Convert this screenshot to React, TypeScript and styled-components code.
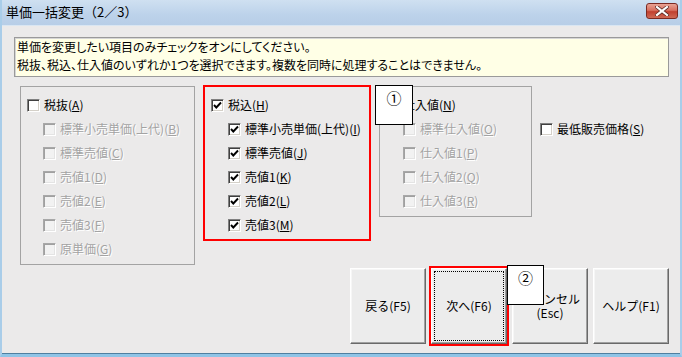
import React from "react";
import styled, { createGlobalStyle, css } from "styled-components";

const GlobalStyle = createGlobalStyle`
  html, body { margin: 0; padding: 0; background: #ebeaea; }
  body {
    font-family: "Noto Sans CJK JP", "Noto Sans", sans-serif;
    font-size: 12px;
    color: #000;
  }
`;

const Window = styled.div`
  width: 682px;
  height: 357px;
  box-sizing: border-box;
  display: flex;
  flex-direction: column;
  background: #ebeaea;
  border-left: 2px solid #a9cde9;
  border-right: 2px solid #a9cde9;
  border-bottom: 3px solid #8fc4e6;
  box-shadow: inset 0 -1px 0 #4f7fa0;
  overflow: hidden;
`;

const TitleBar = styled.div`
  height: 26px;
  flex: none;
  margin: 0 -2px;
  padding: 0 4px 0 6px;
  display: flex;
  align-items: center;
  justify-content: space-between;
  background: linear-gradient(#cfe0f1, #bcd2ea 60%, #b7cee7);
  border-bottom: 1px solid #d9e6f2;
  box-sizing: border-box;
`;

const Title = styled.div`
  font-size: 13px;
  line-height: 16px;
  margin-top: -1px;
`;

const CloseButton = styled.div`
  width: 32px;
  height: 16px;
  margin-top: -4px;
  box-sizing: border-box;
  border: 1px solid #7c2a22;
  border-radius: 3px;
  background: linear-gradient(#e9a394, #d8705f 45%, #c1402f 55%, #cf6a55);
  display: flex;
  align-items: center;
  justify-content: center;
`;

const Body = styled.div`
  flex: 1;
  padding: 11px 11px 0 12px;
  display: flex;
  flex-direction: column;
`;

const Message = styled.div`
  height: 40px;
  box-sizing: border-box;
  background: #ffffe6;
  border: 1px solid #9a9a9a;
  box-shadow: inset 1px 1px 0 #d6d6d6;
  padding: 0 0 0 2px;
  line-height: 18px;
  font-feature-settings: "palt";
  white-space: nowrap;
`;

const Options = styled.div`
  margin-top: 8px;
  padding-left: 6px;
  display: flex;
  align-items: flex-start;
  gap: 8px;
`;

const Group = styled.div<{ $w: number; $h: number; $offset: number }>`
  position: relative;
  width: ${(p) => p.$w}px;
  height: ${(p) => p.$h}px;
  margin-top: 1px;
  box-sizing: border-box;
  border: 1px solid #a3a3a3;
  padding: 6px 0 0 6px;
  --child: ${(p) => p.$offset}px;
`;

const Highlight = styled.div`
  width: 168px;
  height: 156px;
  box-sizing: border-box;
  border: 2px solid #ff0000;
  padding: 6px 0 0 6px;
  --child: 17px;
`;

const Standalone = styled.div`
  margin-top: 32px;
`;

const Row = styled.div<{ $child?: boolean }>`
  height: 24px;
  display: flex;
  align-items: center;
  gap: 4px;
  padding-left: ${(p) => (p.$child ? "var(--child)" : "0")};
  white-space: nowrap;
`;

const Box = styled.span<{ $disabled?: boolean }>`
  width: 13px;
  height: 13px;
  flex: none;
  box-sizing: border-box;
  border: 1px solid;
  border-color: #808080 #ffffff #ffffff #808080;
  box-shadow: inset 1px 1px 0 #404040, inset -1px -1px 0 #d4d0c8;
  background: ${(p) => (p.$disabled ? "#f2f2f2" : "#ffffff")};
  display: flex;
  align-items: center;
  justify-content: center;
  ${(p) =>
    p.$disabled &&
    css`
      box-shadow: inset 1px 1px 0 #a0a0a0, inset -1px -1px 0 #e4e4e4;
      border-color: #a8a8a8 #ffffff #ffffff #a8a8a8;
    `}
`;

const Label = styled.span<{ $disabled?: boolean }>`
  line-height: 16px;
  color: ${(p) => (p.$disabled ? "#a3a3a3" : "#000")};
  text-shadow: ${(p) => (p.$disabled ? "1px 1px 0 #ffffff" : "none")};
`;

const Key = styled.span`
  text-decoration: underline;
  text-underline-offset: 1px;
`;

const Callout = styled.div<{ $left?: number; $right?: number; $top: number; $w: number }>`
  position: absolute;
  top: ${(p) => p.$top}px;
  ${(p) => (p.$left !== undefined ? `left: ${p.$left}px;` : "")}
  ${(p) => (p.$right !== undefined ? `right: ${p.$right}px;` : "")}
  width: ${(p) => p.$w}px;
  height: 40px;
  box-sizing: border-box;
  background: #ffffff;
  border: 1px solid #000;
  text-align: center;
  font-size: 15px;
  line-height: 18px;
  padding-top: 3px;
  z-index: 2;
`;

const Buttons = styled.div`
  position: relative;
  margin-top: 3px;
  display: flex;
  justify-content: flex-end;
  gap: 5px;
`;

const Button = styled.div<{ $focused?: boolean }>`
  position: relative;
  width: 76px;
  height: 76px;
  box-sizing: border-box;
  background: #ececec;
  border: 1px solid;
  border-color: #ffffff #696969 #696969 #ffffff;
  box-shadow: inset -1px -1px 0 #a0a0a0, inset 1px 1px 0 #f6f6f6;
  display: flex;
  align-items: center;
  justify-content: center;
  text-align: center;
  line-height: 14px;
  font-size: 12px;
  ${(p) =>
    p.$focused &&
    css`
      outline: 2px solid #ff0000;
      outline-offset: 0px;
      &::after {
        content: "";
        position: absolute;
        inset: 2px;
        border: 1px dotted #000;
      }
    `}
`;

type Item = { text: string; key: string; checked?: boolean };

const Check = () => (
  <svg width="9" height="9" viewBox="0 0 9 9">
    <polyline points="1,4 3.3,6.5 8,1.5" fill="none" stroke="#000" strokeWidth="1.9" />
  </svg>
);

const Option: React.FC<{ item: Item; child?: boolean; disabled?: boolean }> = ({ item, child, disabled }) => (
  <Row $child={child}>
    <Box $disabled={disabled}>{item.checked && <Check />}</Box>
    <Label $disabled={disabled}>
      {item.text}(<Key>{item.key}</Key>)
    </Label>
  </Row>
);

const exclTax: Item[] = [
  { text: "標準小売単価(上代)", key: "B" },
  { text: "標準売値", key: "C" },
  { text: "売値1", key: "D" },
  { text: "売値2", key: "E" },
  { text: "売値3", key: "F" },
  { text: "原単価", key: "G" },
];

const inclTax: Item[] = [
  { text: "標準小売単価(上代)", key: "I", checked: true },
  { text: "標準売値", key: "J", checked: true },
  { text: "売値1", key: "K", checked: true },
  { text: "売値2", key: "L", checked: true },
  { text: "売値3", key: "M", checked: true },
];

const cost: Item[] = [
  { text: "標準仕入値", key: "O" },
  { text: "仕入値1", key: "P" },
  { text: "仕入値2", key: "Q" },
  { text: "仕入値3", key: "R" },
];

export default function App() {
  return (
    <>
      <GlobalStyle />
      <Window>
        <TitleBar>
          <Title>単価一括変更（2／3）</Title>
          <CloseButton>
            <svg width="14" height="10" viewBox="0 0 14 10">
              <path d="M2 1 L12 9 M12 1 L2 9" stroke="#5a2a24" strokeWidth="3.6" strokeLinecap="square" />
              <path d="M2 1 L12 9 M12 1 L2 9" stroke="#ffffff" strokeWidth="2.2" strokeLinecap="square" />
            </svg>
          </CloseButton>
        </TitleBar>
        <Body>
          <Message>
            単価を変更したい項目のみチェックをオンにしてください。
            <br />
            税抜、税込、仕入値のいずれか1つを選択できます。複数を同時に処理することはできません。
          </Message>
          <Options>
            <Group $w={175} $h={179} $offset={16}>
              <Option item={{ text: "税抜", key: "A" }} />
              {exclTax.map((it) => (
                <Option key={it.key} item={it} child disabled />
              ))}
            </Group>
            <Highlight>
              <Option item={{ text: "税込", key: "H", checked: true }} />
              {inclTax.map((it) => (
                <Option key={it.key} item={it} child />
              ))}
            </Highlight>
            <Group $w={153} $h={131} $offset={17}>
              <Option item={{ text: "仕入値", key: "N" }} />
              {cost.map((it) => (
                <Option key={it.key} item={it} child disabled />
              ))}
              <Callout $left={-5} $top={-2} $w={38}>
                ①
              </Callout>
            </Group>
            <Standalone>
              <Option item={{ text: "最低販売価格", key: "S" }} />
            </Standalone>
          </Options>
          <Buttons>
            <Button>戻る(F5)</Button>
            <Button $focused>次へ(F6)</Button>
            <Button>
              キャンセル
              <br />
              (Esc)
            </Button>
            <Button>ヘルプ(F1)</Button>
            <Callout $right={125} $top={-3} $w={37}>
              ②
            </Callout>
          </Buttons>
        </Body>
      </Window>
    </>
  );
}
